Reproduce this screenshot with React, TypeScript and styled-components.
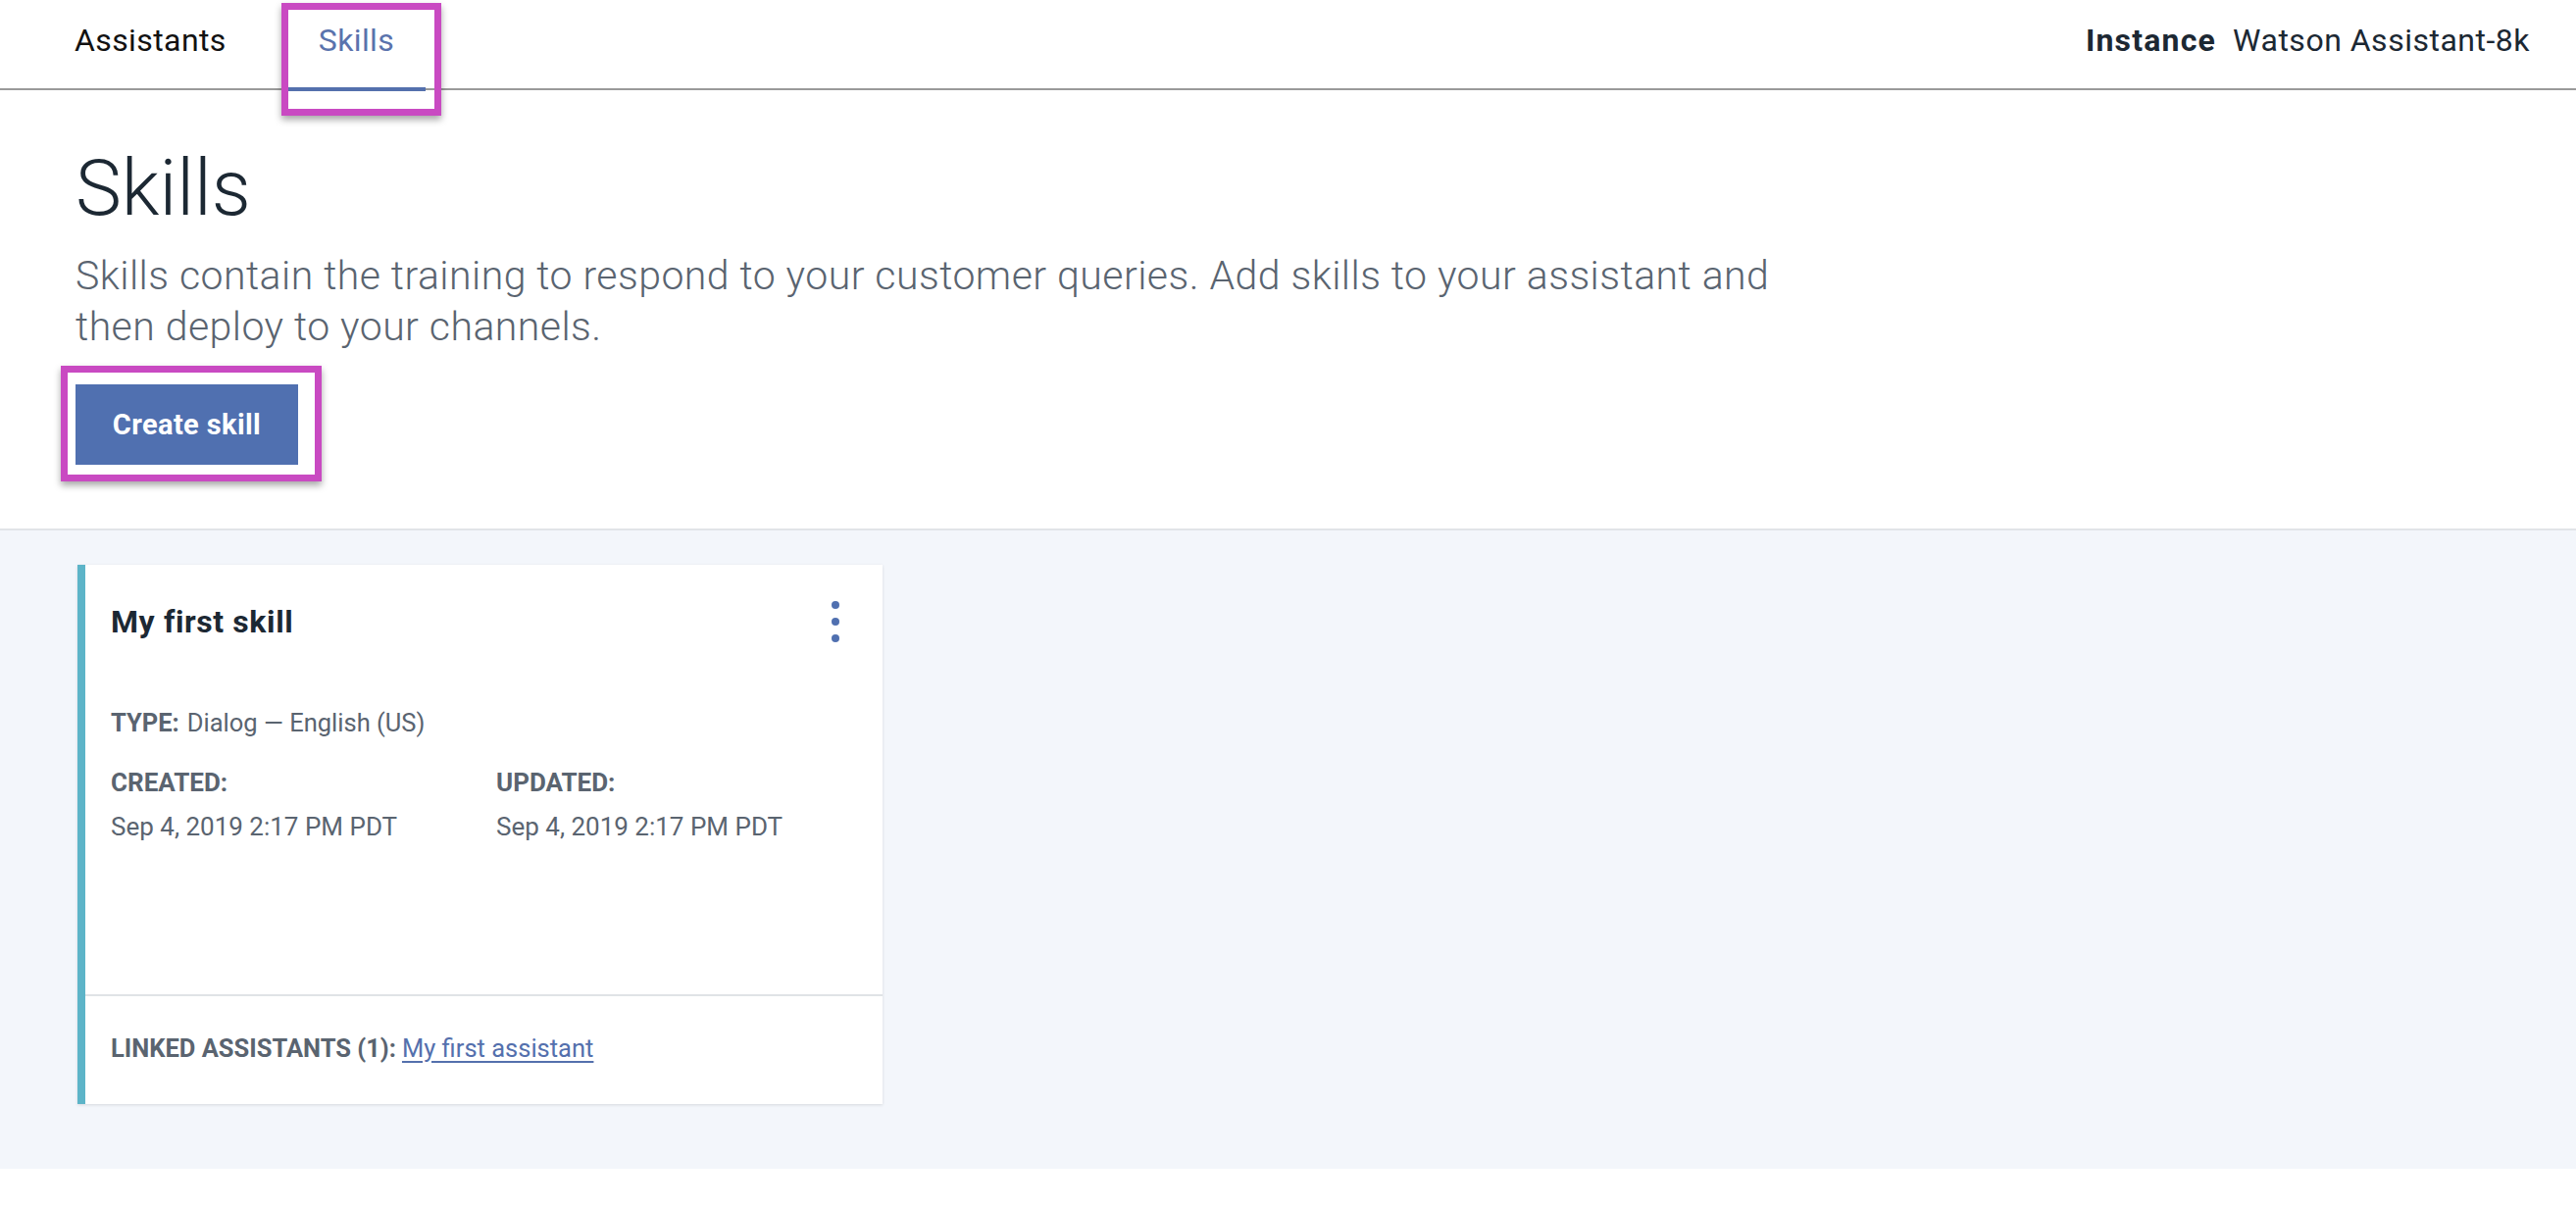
import React from "react";
import styled, { createGlobalStyle } from "styled-components";

const GlobalStyle = createGlobalStyle`
  html, body {
    margin: 0;
    padding: 0;
    background: #ffffff;
  }
  body {
    font-family: Roboto, "Noto Sans", "Liberation Sans", sans-serif;
    color: #152935;
    -webkit-font-smoothing: antialiased;
  }
  * { box-sizing: border-box; }
`;

const Page = styled.div`
  display: flex;
  flex-direction: column;
  width: 100%;
`;

const Header = styled.header`
  display: flex;
  justify-content: space-between;
  align-items: flex-start;
  height: 92px;
  border-bottom: 2px solid #9a9a9a;
  padding: 0 47px 0 44px;
`;

const Tabs = styled.nav`
  display: flex;
  gap: 30px;
  height: 93px;
`;

const Tab = styled.div<{ $active?: boolean }>`
  position: relative;
  height: 93px;
  padding: 25px 32px 0;
  font-size: 32px;
  line-height: 32px;
  font-weight: 400;
  letter-spacing: 0.4px;
  color: ${(p) => (p.$active ? "#5a73ad" : "#121212")};
  border-bottom: 4px solid ${(p) => (p.$active ? "#5470ad" : "transparent")};
`;

const TabHighlight = styled.span`
  position: absolute;
  left: -6px;
  right: -16px;
  top: 3px;
  bottom: -29px;
  border: 7px solid #c94ac2;
  box-shadow: 0 4px 7px rgba(0, 0, 0, 0.35);
  pointer-events: none;
`;

const InstanceInfo = styled.div`
  display: flex;
  gap: 17px;
  padding-top: 25px;
  font-size: 32px;
  line-height: 32px;
  letter-spacing: 0.5px;
  color: #1c2833;
`;

const InstanceLabel = styled.span`
  font-weight: 700;
  letter-spacing: 1.2px;
`;

const Intro = styled.section`
  display: flex;
  flex-direction: column;
  align-items: flex-start;
  padding: 55px 0 65px 77px;
  border-bottom: 2px solid #e1e4e8;
`;

const Title = styled.h1`
  margin: 0;
  font-size: 79px;
  line-height: 90px;
  font-weight: 300;
  color: #1c2833;
`;

const Description = styled.p`
  margin: 18px 0 0;
  max-width: 1760px;
  font-size: 41px;
  line-height: 52px;
  font-weight: 300;
  letter-spacing: 0.45px;
  color: #5a6470;
`;

const ButtonWrap = styled.div`
  position: relative;
  margin-top: 33px;
`;

const PrimaryButton = styled.button`
  display: flex;
  align-items: center;
  justify-content: center;
  width: 227px;
  height: 82px;
  border: none;
  background: #5070b0;
  color: #ffffff;
  font-family: inherit;
  font-size: 29px;
  font-weight: 700;
  letter-spacing: 0.4px;
  cursor: pointer;
`;

const ButtonHighlight = styled.span`
  position: absolute;
  left: -15px;
  right: -24px;
  top: -19px;
  bottom: -17px;
  border: 7px solid #c94ac2;
  box-shadow: 0 4px 7px rgba(0, 0, 0, 0.35);
  pointer-events: none;
`;

const Gallery = styled.section`
  display: flex;
  align-items: flex-start;
  background: #f3f6fb;
  padding: 35px 0 66px 79px;
`;

const Card = styled.article`
  display: flex;
  flex-direction: column;
  width: 821px;
  height: 550px;
  background: #ffffff;
  border-left: 8px solid #5db4c8;
  box-shadow: 0 1px 3px rgba(0, 0, 0, 0.12);
`;

const CardBody = styled.div`
  flex: 1;
  display: flex;
  flex-direction: column;
  padding: 38px 0 0 26px;
`;

const CardHead = styled.div`
  display: flex;
  align-items: center;
  justify-content: space-between;
  height: 40px;
`;

const CardTitle = styled.h2`
  margin: 0;
  font-size: 32px;
  line-height: 40px;
  font-weight: 700;
  letter-spacing: 0.6px;
  color: #1c2833;
`;

const MenuButton = styled.button`
  display: flex;
  align-items: center;
  justify-content: center;
  width: 40px;
  height: 56px;
  margin-right: 28px;
  padding: 0;
  border: none;
  background: transparent;
  cursor: pointer;
`;

const MetaLine = styled.div<{ $top: number }>`
  margin-top: ${(p) => p.$top}px;
  font-size: 25.5px;
  line-height: 36px;
  color: #5a6470;
`;

const MetaLabel = styled.span`
  font-weight: 700;
  margin-right: 8px;
`;

const DateGrid = styled.div`
  display: grid;
  grid-template-columns: 393px 393px;
  margin-top: 25px;
`;

const DateCell = styled.div`
  display: flex;
  flex-direction: column;
  gap: 9px;
  font-size: 26px;
  line-height: 36px;
  color: #5a6470;
`;

const DateLabel = styled.span`
  font-weight: 700;
`;

const CardFooter = styled.div`
  border-top: 2px solid #e0e3e6;
  padding: 35px 0 39px 26px;
  font-size: 25.5px;
  line-height: 36px;
  color: #5a6470;
`;

const FooterLabel = styled.span`
  font-weight: 700;
  margin-right: 6px;
`;

const AssistantLink = styled.a`
  color: #5470ad;
  text-decoration: underline;
  text-underline-offset: 4px;
`;

const KebabIcon = () => (
  <svg width="10" height="44" viewBox="0 0 10 44" aria-hidden="true">
    <circle cx="5" cy="5" r="4" fill="#5070b0" />
    <circle cx="5" cy="22" r="4" fill="#5070b0" />
    <circle cx="5" cy="39" r="4" fill="#5070b0" />
  </svg>
);

export default function App() {
  return (
    <Page>
      <GlobalStyle />
      <Header>
        <Tabs>
          <Tab>Assistants</Tab>
          <Tab $active>
            Skills
            <TabHighlight />
          </Tab>
        </Tabs>
        <InstanceInfo>
          <InstanceLabel>Instance</InstanceLabel>
          <span>Watson Assistant-8k</span>
        </InstanceInfo>
      </Header>

      <Intro>
        <Title>Skills</Title>
        <Description>
          Skills contain the training to respond to your customer queries. Add skills to your assistant and then
          deploy to your channels.
        </Description>
        <ButtonWrap>
          <PrimaryButton>Create skill</PrimaryButton>
          <ButtonHighlight />
        </ButtonWrap>
      </Intro>

      <Gallery>
        <Card>
          <CardBody>
            <CardHead>
              <CardTitle>My first skill</CardTitle>
              <MenuButton aria-label="Options">
                <KebabIcon />
              </MenuButton>
            </CardHead>
            <MetaLine $top={65}>
              <MetaLabel>TYPE:</MetaLabel>Dialog — English (US)
            </MetaLine>
            <DateGrid>
              <DateCell>
                <DateLabel>CREATED:</DateLabel>
                <span>Sep 4, 2019 2:17 PM PDT</span>
              </DateCell>
              <DateCell>
                <DateLabel>UPDATED:</DateLabel>
                <span>Sep 4, 2019 2:17 PM PDT</span>
              </DateCell>
            </DateGrid>
          </CardBody>
          <CardFooter>
            <FooterLabel>LINKED ASSISTANTS (1):</FooterLabel>
            <AssistantLink href="#">My first assistant</AssistantLink>
          </CardFooter>
        </Card>
      </Gallery>
    </Page>
  );
}
